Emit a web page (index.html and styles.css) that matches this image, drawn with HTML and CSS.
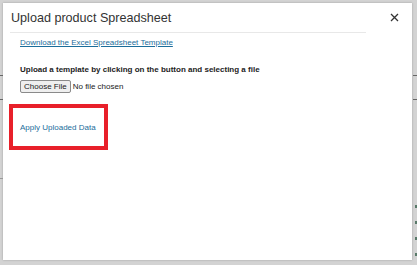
FILE: index.html
```html
<!DOCTYPE html>
<html>
<head>
<meta charset="utf-8">
<link rel="stylesheet" href="styles.css">
</head>
<body>
<div class="backdrop">
  <div class="edge-left">
    <span class="tick t1"></span><span class="tick t2"></span><span class="tick t3"></span>
  </div>
  <div class="modal">
    <div class="header">
      <div class="title-wrap"><h1 class="title">Upload product Spreadsheet</h1></div>
      <button class="close" aria-label="Close">
        <svg width="9" height="9" viewBox="0 0 9 9"><path d="M1 1L8 8M8 1L1 8" stroke="#333" stroke-width="1.3" fill="none"/></svg>
      </button>
    </div>
    <div class="body">
      <a class="link download" href="#">Download the Excel Spreadsheet Template</a>
      <p class="instr">Upload a template by clicking on the button and selecting a file</p>
      <div class="file-row">
        <span class="file-btn">Choose File</span>
        <span class="file-name">No file chosen</span>
      </div>
    </div>
    <div class="apply-box">
      <a class="link apply" href="#">Apply Uploaded Data</a>
    </div>
  </div>
  <div class="edge-right">
    <span class="tick r1"></span><span class="tick r2"></span>
    <span class="tick g g1"></span><span class="tick g g2"></span><span class="tick g g3"></span><span class="tick g g4"></span>
  </div>
</div>
</body>
</html>
```
FILE: styles.css
```css
* { box-sizing: border-box; }
html, body { margin: 0; padding: 0; }
body {
  width: 417px;
  height: 265px;
  background: #d3d3d3;
  font-family: "Liberation Sans", Arial, sans-serif;
  overflow: hidden;
}
.backdrop {
  display: flex;
  height: 265px;
  padding-top: 3px;
}
.edge-left, .edge-right {
  position: relative;
  flex: 0 0 3px;
  height: 257px;
}
.edge-right { flex: 0 0 5px; }
.tick {
  position: absolute;
  width: 3px;
  height: 1px;
  background: #666;
}
.edge-left .tick { left: 0; }
.edge-right .tick { right: 0; width: 4px; }
.t1 { top: 72px; }
.t2 { top: 96px; }
.t3 { top: 175px; background: #999; }
.r1 { top: 72px; }
.r2 { top: 96px; }
.g { width: 2px !important; height: 3px; background: #5a7a6a; }
.g1 { top: 202px; }
.g2 { top: 218px; }
.g3 { top: 234px; }
.g4 { top: 250px; }
.modal {
  flex: 0 0 409px;
  height: 257px;
  background: #fff;
  box-shadow: 0 0 2px rgba(0,0,0,0.25);
}
.header {
  display: flex;
  align-items: flex-start;
  padding-left: 7px;
}
.title-wrap {
  width: 356px;
  height: 30px;
  border-bottom: 1px solid #e8e8e8;
  display: flex;
  align-items: center;
  padding-left: 1px;
}
.title {
  margin: 0;
  font-size: 12.6px;
  font-weight: normal;
  color: #333;
}
.close {
  margin: 10px 0 0 24px;
  padding: 0;
  border: 0;
  background: none;
  width: 9px;
  height: 9px;
  display: flex;
}
.body {
  padding: 5px 0 0 17px;
}
.link {
  color: #1b6d9b;
  font-size: 8px;
}
.download {
  display: block;
  line-height: 10px;
}
.instr {
  margin: 17px 0 0;
  font-size: 8px;
  font-weight: bold;
  color: #222;
  line-height: 10px;
}
.file-row {
  display: flex;
  align-items: center;
  gap: 2px;
  margin-top: 5px;
}
.file-btn {
  display: inline-block;
  font-size: 8px;
  color: #222;
  background: #efefef;
  border: 1px solid #8a8a8a;
  border-radius: 2px;
  padding: 1px 3px;
  line-height: 9px;
}
.file-name {
  font-size: 8px;
  color: #222;
}
.apply-box {
  margin: 11px 0 0 6px;
  width: 99px;
  height: 46px;
  border: 4px solid #e8202a;
  display: flex;
  align-items: center;
  padding-left: 7px;
}
.apply {
  text-decoration: none;
}
```
